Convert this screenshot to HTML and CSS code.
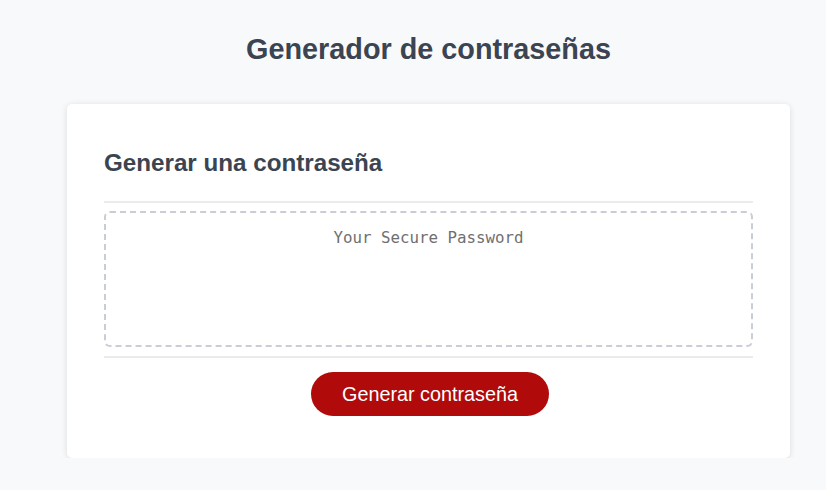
FILE: index.html
```html
<!DOCTYPE html>
<html lang="es">
<head>
<meta charset="utf-8">
<title>Generador de contraseñas</title>
<link rel="stylesheet" href="styles.css">
</head>
<body>
  <div class="wrapper">
    <header class="page-header">
      <h1 class="page-title">Generador de contraseñas</h1>
    </header>
    <main class="card">
      <h2 class="card-title">Generar una contraseña</h2>
      <hr class="divider">
      <textarea class="password" readonly placeholder="Your Secure Password" aria-label="Generated Password"></textarea>
      <hr class="divider">
      <div class="actions">
        <button class="btn" type="button">Generar contraseña</button>
      </div>
    </main>
  </div>
</body>
</html>
```
FILE: styles.css
```css
* { box-sizing: border-box; }
html, body {
  margin: 0;
  padding: 0;
  background: #f8f9fb;
  font-family: "Liberation Sans", Arial, sans-serif;
  color: #3b4451;
}
.wrapper {
  padding: 32px 36px 0 67px;
}
.page-header {
  display: flex;
  justify-content: center;
}
.page-title {
  margin: 0;
  font-size: 28.8px;
  line-height: 34px;
  font-weight: bold;
  color: #3b4451;
}
.card {
  margin-top: 38px;
  background: #fff;
  border-radius: 5px;
  box-shadow: 0 1px 6px rgba(0, 0, 0, 0.12);
  padding: 45px 37px 42px;
}
.card-title {
  margin: 0 0 24px;
  font-size: 24.2px;
  line-height: 28px;
  font-weight: bold;
  color: #3b4451;
}
.divider {
  margin: 0;
  border: 0;
  border-top: 2px solid #ebebec;
  height: 0;
}
.password {
  display: block;
  width: 100%;
  height: 136px;
  margin: 8px 0 9px;
  padding: 15px 10px;
  border: 2px dashed #c9ced6;
  border-radius: 6px;
  resize: none;
  background: #fff;
  font-family: "DejaVu Sans Mono", "Liberation Mono", monospace;
  font-size: 15.8px;
  line-height: 19px;
  text-align: center;
  color: #444;
  outline: none;
}
.password::placeholder {
  color: #6f6f6f;
}
.actions {
  display: flex;
  justify-content: center;
  margin-top: 14px;
  padding-left: 3px;
}
.btn {
  width: 238px;
  height: 44px;
  border: 0;
  border-radius: 22px;
  background: #b00a0a;
  color: #fff;
  font-family: "Liberation Sans", Arial, sans-serif;
  font-size: 19.8px;
  cursor: pointer;
}
```
